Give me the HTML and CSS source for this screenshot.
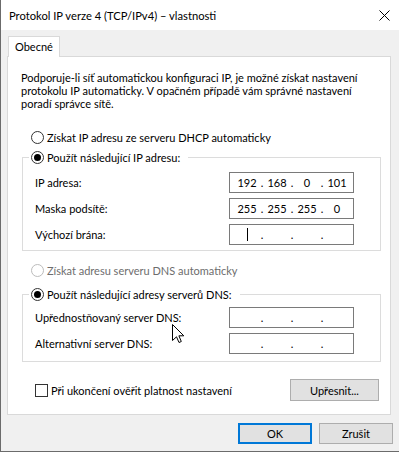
FILE: index.html
```html
<!DOCTYPE html>
<html lang="cs">
<head>
<meta charset="utf-8">
<title>Protokol IP verze 4 (TCP/IPv4) – vlastnosti</title>
<link rel="stylesheet" href="styles.css">
</head>
<body>
<div class="window">
  <div class="titlebar">
    <span class="title">Protokol IP verze 4 (TCP/IPv4) – vlastnosti</span>
    <svg class="close" width="11" height="11" viewBox="0 0 11 11"><path d="M0.5 0.5 L10.5 10.5 M10.5 0.5 L0.5 10.5" stroke="#000" stroke-width="1" fill="none"/></svg>
  </div>
  <div class="body">
    <div class="tabs"><div class="tab">Obecné</div></div>
    <div class="panel">
      <p class="intro">Podporuje-li síť automatickou konfiguraci IP, je možné získat nastavení<br>protokolu IP automaticky. V opačném případě vám správné nastavení<br>poradí správce sítě.</p>
      <div class="radio top"><span class="rb"></span><span>Získat IP adresu ze serveru DHCP automaticky</span></div>
      <fieldset class="group g1">
        <legend><span class="radio"><span class="rb on"></span><span>Použít následující IP adresu:</span></span></legend>
        <div class="row first"><span>IP adresa:</span><div class="ip"><span class="f">192</span><span class="d">.</span><span class="f">168</span><span class="d">.</span><span class="f">0</span><span class="d">.</span><span class="f">101</span></div></div>
        <div class="row"><span>Maska podsítě:</span><div class="ip"><span class="f">255</span><span class="d">.</span><span class="f">255</span><span class="d">.</span><span class="f">255</span><span class="d">.</span><span class="f">0</span></div></div>
        <div class="row"><span>Výchozí brána:</span><div class="ip"><span class="f"><span class="caret"></span></span><span class="d">.</span><span class="f"></span><span class="d">.</span><span class="f"></span><span class="d">.</span><span class="f"></span></div></div>
      </fieldset>
      <div class="radio dis"><span class="rb"></span><span>Získat adresu serveru DNS automaticky</span></div>
      <fieldset class="group g2">
        <legend><span class="radio"><span class="rb on"></span><span>Použít následující adresy serverů DNS:</span></span></legend>
        <div class="row first"><span>Upřednostňovaný server DNS:</span><div class="ip"><span class="f"></span><span class="d">.</span><span class="f"></span><span class="d">.</span><span class="f"></span><span class="d">.</span><span class="f"></span></div></div>
        <div class="row"><span>Alternativní server DNS:</span><div class="ip"><span class="f"></span><span class="d">.</span><span class="f"></span><span class="d">.</span><span class="f"></span><span class="d">.</span><span class="f"></span></div></div>
      </fieldset>
      <div class="foot">
        <div class="check"><span class="cb"></span><span>Při ukončení ověřit platnost nastavení</span></div>
        <button class="btn adv">Upřesnit...</button>
      </div>
    </div>
    <div class="buttons">
      <button class="btn ok">OK</button>
      <button class="btn">Zrušit</button>
    </div>
  </div>
  <svg class="cursor" width="13" height="21" viewBox="0 0 13 21"><path d="M0.5 0.5 L0.5 16.5 L4.5 12.8 L7 18.5 L9.3 17.5 L6.9 11.8 L11.8 11.8 Z" fill="#fff" stroke="#000" stroke-width="1" stroke-linejoin="miter"/></svg>
</div>
</body>
</html>
```
FILE: styles.css
```css
* { box-sizing: border-box; }
body {
  margin: 0;
  background: #fff;
  font-family: Lato, "Liberation Sans", sans-serif;
  font-size: 11px;
  color: #000;
}
.window {
  position: relative;
  width: 399px;
  height: 452px;
  background: #f0f0f0;
  border-left: 1px solid #6b6b6b;
  border-bottom: 1px solid #6b6b6b;
}
.titlebar {
  height: 30px;
  background: #fff;
  display: flex;
  align-items: center;
  justify-content: space-between;
  padding-left: 8px;
}
.title { font-size: 11.2px; }
.close { margin-right: 9px; }
.body { padding-top: 6px; }
.tabs { display: flex; padding-left: 7px; }
.tab {
  width: 52px;
  height: 21px;
  border: 1px solid #d9d9d9;
  border-bottom: none;
  background: #fff;
  margin-bottom: -1px;
  position: relative;
  z-index: 1;
  padding-left: 6px;
  line-height: 19px;
}
.panel {
  margin-left: 6px;
  width: 384px;
  height: 359px;
  border: 1px solid #d9d9d9;
  background: #fff;
  padding-top: 14px;
}
.intro { margin: 0 0 0 13px; line-height: 13px; }
.radio { display: flex; align-items: center; height: 16px; gap: 3px; }
.radio.top { margin: 19px 0 0 23px; }
.radio.dis { margin: 11px 0 0 23px; color: #6d6d6d; }
.rb {
  width: 13px;
  height: 13px;
  border: 1px solid #333;
  border-radius: 50%;
  background: #fff;
  flex: none;
  display: flex;
  align-items: center;
  justify-content: center;
}
.rb.on::after {
  content: "";
  width: 7px;
  height: 7px;
  border-radius: 50%;
  background: #000;
}
.dis .rb { border-color: #bcbcbc; }
.group {
  margin: 4px 0 0 14px;
  width: 359px;
  border: 1px solid #dcdcdc;
  padding: 0 0 5px 0;
  min-width: 0;
}
.group legend { margin-left: 6px; padding: 0 8px 0 2px; }
.g2 { margin-top: 8px; padding-bottom: 7px; }
.row {
  display: grid;
  grid-template-columns: 194px 125px;
  align-items: center;
  padding-left: 12px;
  height: 21px;
  margin-top: 5px;
}
.g1 .row.first { margin-top: 7px; }
.g2 .row.first { margin-top: 5px; }
.ip {
  height: 21px;
  border: 1px solid #7a7a7a;
  display: flex;
  align-items: center;
  padding-left: 4px;
  background: #fff;
}
.f { width: 26px; text-align: center; display: flex; justify-content: center; align-items: center; }
.d { width: 4px; text-align: center; }
.caret { display: block; width: 1px; height: 13px; background: #000; }
.foot {
  display: flex;
  align-items: center;
  justify-content: space-between;
  margin: 17px 11px 0 27px;
  height: 22px;
}
.check { display: flex; align-items: center; gap: 3px; }
.cb { width: 13px; height: 13px; border: 1px solid #333; background: #fff; flex: none; }
.btn {
  font: inherit;
  color: #000;
  background: #e1e1e1;
  border: 1px solid #adadad;
  border-radius: 0;
  padding: 0;
  width: 74px;
  height: 21px;
}
.adv { width: 89px; height: 22px; }
.ok { border: 2px solid #0078d7; }
.buttons {
  display: flex;
  justify-content: flex-end;
  gap: 7px;
  margin-top: 8px;
  padding-right: 6px;
}
.cursor { position: absolute; left: 171px; top: 324px; }
```
